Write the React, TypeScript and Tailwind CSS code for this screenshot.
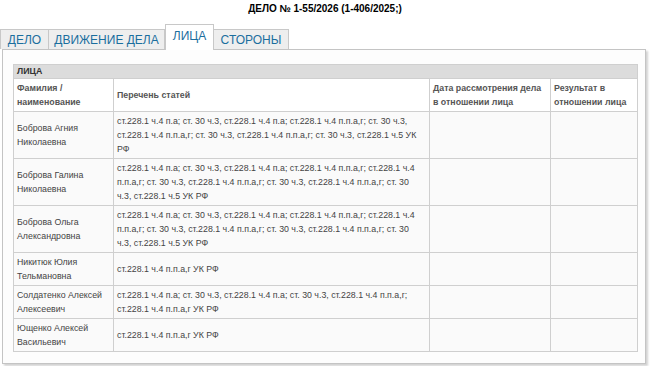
import React from "react";

const rows: { name: [string, string]; lines: string[] }[] = [
  {
    name: ["Боброва Агния", "Николаевна"],
    lines: [
      "ст.228.1 ч.4 п.а; ст. 30 ч.3, ст.228.1 ч.4 п.а; ст.228.1 ч.4 п.п.а,г; ст. 30 ч.3,",
      "ст.228.1 ч.4 п.п.а,г; ст. 30 ч.3, ст.228.1 ч.4 п.п.а,г; ст. 30 ч.3, ст.228.1 ч.5 УК",
      "РФ",
    ],
  },
  {
    name: ["Боброва Галина", "Николаевна"],
    lines: [
      "ст.228.1 ч.4 п.а; ст. 30 ч.3, ст.228.1 ч.4 п.а; ст.228.1 ч.4 п.п.а,г; ст.228.1 ч.4",
      "п.п.а,г; ст. 30 ч.3, ст.228.1 ч.4 п.п.а,г; ст. 30 ч.3, ст.228.1 ч.4 п.п.а,г; ст. 30",
      "ч.3, ст.228.1 ч.5 УК РФ",
    ],
  },
  {
    name: ["Боброва Ольга", "Александровна"],
    lines: [
      "ст.228.1 ч.4 п.а; ст. 30 ч.3, ст.228.1 ч.4 п.а; ст.228.1 ч.4 п.п.а,г; ст.228.1 ч.4",
      "п.п.а,г; ст. 30 ч.3, ст.228.1 ч.4 п.п.а,г; ст. 30 ч.3, ст.228.1 ч.4 п.п.а,г; ст. 30",
      "ч.3, ст.228.1 ч.5 УК РФ",
    ],
  },
  {
    name: ["Никитюк Юлия", "Тельмановна"],
    lines: ["ст.228.1 ч.4 п.п.а,г УК РФ"],
  },
  {
    name: ["Солдатенко Алексей", "Алексеевич"],
    lines: [
      "ст.228.1 ч.4 п.а; ст. 30 ч.3, ст.228.1 ч.4 п.а; ст. 30 ч.3, ст.228.1 ч.4 п.п.а,г;",
      "ст.228.1 ч.4 п.п.а,г УК РФ",
    ],
  },
  {
    name: ["Ющенко Алексей", "Васильевич"],
    lines: ["ст.228.1 ч.4 п.п.а,г УК РФ"],
  },
];

const cell =
  "border border-[#cfcfcf] px-[3px] py-[2px] align-middle text-left";

export default function App() {
  return (
    <div className="w-[650px] h-[366px] overflow-hidden bg-white font-['Liberation_Sans',Arial,sans-serif] text-[#444]">
      <div className="h-[24px] pt-[3px] text-center text-[10px] font-bold leading-[12px] text-black">
        ДЕЛО № 1-55/2026 (1-406/2025;)
      </div>
      <div className="relative z-10 flex h-[25px] items-end text-[12px] text-[#1b6e9e]">
        <div className="flex h-[20px] w-[49px] items-center justify-center border border-b-0 border-[#c8c8c8] bg-[#eeeeee]">
          ДЕЛО
        </div>
        <div className="flex h-[20px] w-[116px] items-center justify-center border-t border-r border-[#c8c8c8] bg-[#eeeeee]">
          ДВИЖЕНИЕ ДЕЛА
        </div>
        <div className="mb-[-1px] flex h-[26px] w-[49px] items-start justify-center border border-b-0 border-[#c8c8c8] bg-white pt-[2px]">
          ЛИЦА
        </div>
        <div className="flex h-[20px] w-[75px] items-center justify-center border-t border-r border-[#c8c8c8] bg-[#eeeeee]">
          СТОРОНЫ
        </div>
      </div>
      <div className="ml-[2px] h-[315px] w-[644px] border border-[#c4c4c4] bg-[#fdfdfd] px-[10px] pt-[14px] shadow-[2px_2px_2px_rgba(0,0,0,0.18)]">
        <table className="w-[624px] table-fixed border-collapse text-[8.8px] leading-[14px]">
          <colgroup>
            <col className="w-[100px]" />
            <col className="w-[316px]" />
            <col className="w-[121px]" />
            <col className="w-[87px]" />
          </colgroup>
          <tbody>
            <tr>
              <td
                colSpan={4}
                className="h-[14px] border border-[#cfcfcf] bg-[#dcdcdc] px-[3px] py-0 font-bold leading-[13px] text-[#333]"
              >
                ЛИЦА
              </td>
            </tr>
            <tr className="bg-white font-bold text-[#555]">
              <td className={cell}>
                Фамилия /<br />
                наименование
              </td>
              <td className={cell}>Перечень статей</td>
              <td className={cell}>
                Дата рассмотрения дела<br />в отношении лица
              </td>
              <td className={cell}>
                Результат в<br />
                отношении лица
              </td>
            </tr>
            {rows.map((r, i) => (
              <tr key={i} className="bg-[#fafafa]">
                <td className={cell}>
                  {r.name[0]}
                  <br />
                  {r.name[1]}
                </td>
                <td className={cell}>
                  {r.lines.map((l, j) => (
                    <div key={j} className="whitespace-nowrap">
                      {l}
                    </div>
                  ))}
                </td>
                <td className={cell}></td>
                <td className={cell}></td>
              </tr>
            ))}
          </tbody>
        </table>
      </div>
    </div>
  );
}
